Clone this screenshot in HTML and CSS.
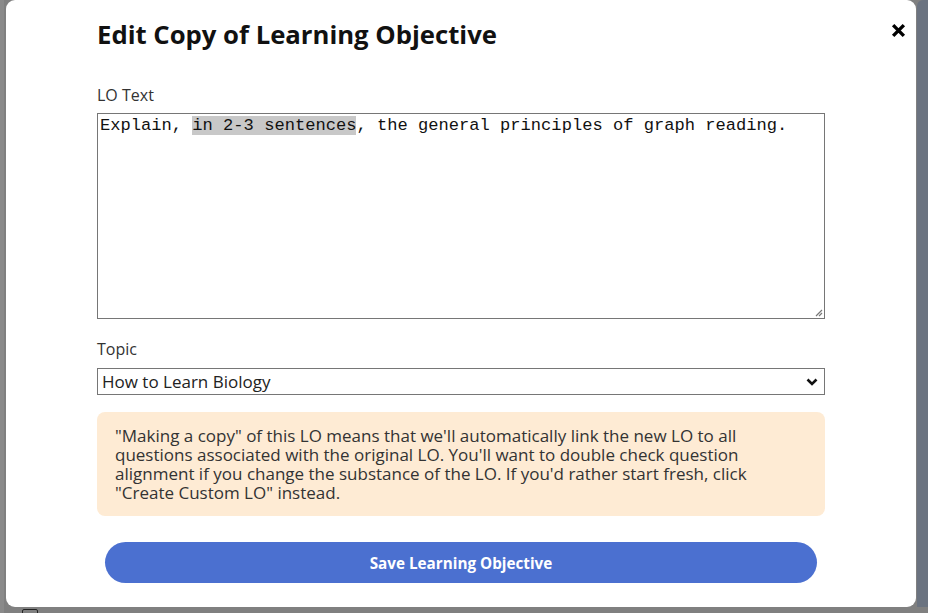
FILE: index.html
```html
<!DOCTYPE html>
<html lang="en">
<head>
<meta charset="utf-8">
<title>Edit Copy of Learning Objective</title>
<link rel="stylesheet" href="styles.css">
</head>
<body>
<div class="backdrop">
  <div class="bg-check"></div>
</div>
<div class="scroll-strip"></div>
<div class="modal">
  <div class="modal-head">
    <h2 class="modal-title">Edit Copy of Learning Objective</h2>
    <button class="close-btn" aria-label="Close">
      <svg width="14" height="14" viewBox="0 0 14 14"><path d="M2 2 L12 12 M12 2 L2 12" stroke="#000" stroke-width="3.2" stroke-linecap="butt"/></svg>
    </button>
  </div>
  <label class="field-label">LO Text</label>
  <div class="textarea"><span>Explain, </span><span class="sel">in 2-3 sentences</span><span>, the general principles of graph reading.</span>
    <svg class="grip" width="10" height="10" viewBox="0 0 10 10"><path d="M9 3 L3 9 M9 6 L6 9" stroke="#777" stroke-width="1.2"/></svg>
  </div>
  <label class="field-label topic-label">Topic</label>
  <div class="select-wrap">
    <select class="select"><option>How to Learn Biology</option></select>
    <svg class="chevron" width="12" height="8" viewBox="0 0 12 8"><path d="M1.5 1.5 L6 6 L10.5 1.5" fill="none" stroke="#111" stroke-width="2.6"/></svg>
  </div>
  <div class="notice">"Making a copy" of this LO means that we'll automatically link the new LO to all questions associated with the original LO. You'll want to double check question alignment if you change the substance of the LO. If you'd rather start fresh, click "Create Custom LO" instead.</div>
  <div class="actions">
    <button class="save-btn">Save Learning Objective</button>
  </div>
</div>
</body>
</html>
```

FILE: styles.css
```css
html, body {
  margin: 0;
  padding: 0;
  height: 100%;
  overflow: hidden;
}
body {
  background: #808080;
  font-family: "Open Sans", "Liberation Sans", sans-serif;
  position: relative;
}
.backdrop {
  height: 100%;
  border-left: 4px solid #8a8a8a;
  box-sizing: border-box;
}
.bg-check {
  position: absolute;
  left: 22px;
  top: 609px;
  width: 14px;
  height: 10px;
  border: 1.5px solid #222;
  border-radius: 2px;
}
.scroll-strip {
  position: absolute;
  top: 0;
  right: 0;
  width: 11px;
  height: 607px;
  background: #6b7380;
  border-top-left-radius: 6px;
}
.modal {
  position: absolute;
  left: 6px;
  top: 0;
  width: 910px;
  height: 607px;
  background: #fff;
  border-radius: 9px;
  box-sizing: border-box;
  padding: 16px 91px 0 91px;
  display: flex;
  flex-direction: column;
}
.modal-head {
  display: flex;
  align-items: flex-start;
  justify-content: space-between;
  margin-bottom: 30px;
}
.modal-title {
  margin: 0;
  font-size: 25.7px;
  font-weight: 700;
  color: #111;
  line-height: 38px;
}
.close-btn {
  position: absolute;
  right: 10px;
  top: 23px;
  background: none;
  border: 0;
  padding: 0;
  width: 15px;
  height: 15px;
  display: flex;
}
.close-btn svg {
  width: 15px;
  height: 15px;
}
.field-label {
  display: block;
  font-size: 16px;
  line-height: 22px;
  color: #333;
  margin-bottom: 7px;
}
.topic-label {
  margin-top: 19px;
  margin-bottom: 8px;
}
.textarea {
  position: relative;
  height: 206px;
  box-sizing: border-box;
  border: 1px solid #767676;
  padding: 2px;
  font-family: "Liberation Mono", "Courier New", monospace;
  font-size: 17.1px;
  line-height: 19px;
  color: #111;
  white-space: pre;
}
.sel {
  background: #c8c8c8;
}
.grip {
  position: absolute;
  right: 1px;
  bottom: 1px;
}
.select-wrap {
  position: relative;
}
.select {
  display: block;
  width: 100%;
  height: 27px;
  box-sizing: border-box;
  -webkit-appearance: none;
  appearance: none;
  border: 1px solid #767676;
  border-radius: 0;
  background: #fff;
  padding: 0 4px;
  font-family: "Open Sans", "Liberation Sans", sans-serif;
  font-size: 17px;
  color: #222;
}
.chevron {
  position: absolute;
  right: 7px;
  top: 10px;
}
.notice {
  margin-top: 17px;
  background: #feebd4;
  border-radius: 8px;
  padding: 14px 18px 14px 18px;
  font-size: 17px;
  line-height: 19px;
  color: #333;
}
.actions {
  padding: 26px 8px 0 8px;
}
.save-btn {
  display: block;
  width: 100%;
  height: 41px;
  border: 0;
  border-radius: 21px;
  background: #4b70d0;
  color: #fff;
  font-family: "Open Sans", "Liberation Sans", sans-serif;
  font-weight: 700;
  font-size: 15.25px;
}
```
